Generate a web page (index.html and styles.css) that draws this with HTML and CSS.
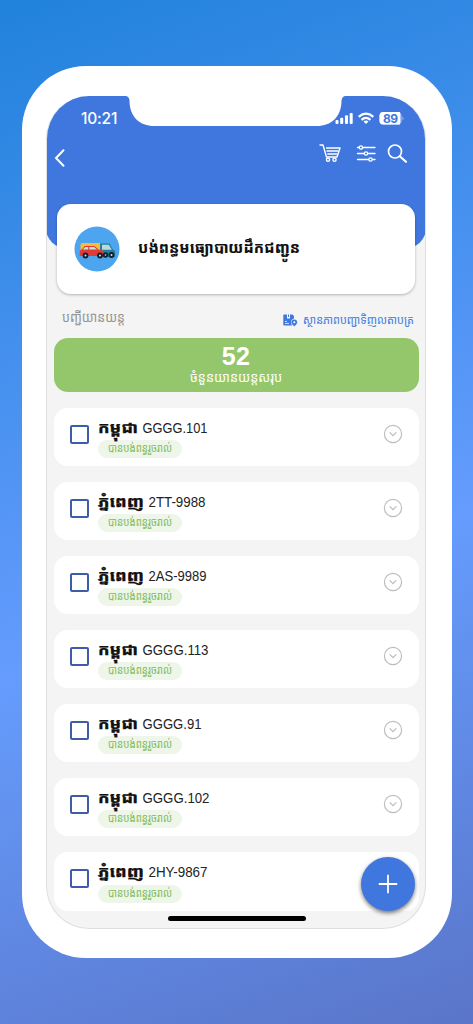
FILE: index.html
```
<!DOCTYPE html>
<html lang="km">
<head>
<meta charset="utf-8">
<title>Vehicles</title>
<link rel="stylesheet" href="styles.css">
</head>
<body>
<div class="phone">
<div class="screen">
  <svg class="notch" width="219" height="31" viewBox="0 0 219 31"><path d="M0 0Q3.200 .500 3.500 4.500C3.500 21 14 30 28 30H191C205 30 215.500 21 215.500 4.500Q216 .500 219 0Z" fill="#fff"/></svg>
  <header class="header">
    <div class="status">
      <span class="time">10:21</span>
      <svg class="status-icons" width="70" height="14" viewBox="0 0 70 14">
        <g fill="#fff"><rect x="0.500" y="9" width="3" height="4" rx="1"/><rect x="5.200" y="6.800" width="3" height="6.200" rx="1"/><rect x="10" y="4.300" width="3" height="8.700" rx="1"/><rect x="14.700" y="2" width="3" height="11" rx="1"/></g>
        <g fill="none" stroke="#fff" stroke-width="2.200"><path d="M23.700 5.800Q31 -.500 38.300 5.800"/><path d="M26.500 8.800Q31 5 35.500 8.800"/></g><path d="M28.500 10.400Q31 8.800 33.500 10.400L31 13Z" fill="#fff"/>
        <rect x="44.500" y="1" width="22" height="12.500" rx="3.800" fill="#b1c7f2"/><path d="M48.300 1H65v12.500H48.300a3.800 3.800 0 0 1-3.800-3.800V4.800A3.800 3.800 0 0 1 48.300 1Z" fill="#fff"/><path d="M67.500 5.500q2 1.700 0 4Z" fill="#b1c7f2"/>
        <text x="48" y="11.500" class="battery-text" textLength="15">89</text>
      </svg>
    </div>
    <div class="toolbar">
      <svg width="12" height="18" viewBox="0 0 12 18"><path d="M9.500 1.300L2 9l7.500 7.700" fill="none" stroke="#fff" stroke-width="2" stroke-linecap="round"/></svg>
      <svg class="actions" width="90" height="22" viewBox="0 0 90 22" fill="none" stroke="#fff" stroke-linecap="round" stroke-linejoin="round">
        <g stroke-width="1.400"><path d="M1 3H4L7.500 15H18L21 6H7.500M8 9H18.500M8.800 12H17.500"/><circle cx="9" cy="17.700" r="1.600"/><circle cx="15.500" cy="17.700" r="1.600"/></g>
        <g stroke-width="1.300"><path d="M38.500 5.500H40M43.800 5.500H56M38.500 11.500H45M49 11.500H56M38.500 17.500H49.500M53.500 17.500H56"/><circle cx="41.900" cy="5.500" r="1.700"/><circle cx="47" cy="11.500" r="1.700"/><circle cx="51.500" cy="17.500" r="1.700"/></g>
        <circle cx="76" cy="9.500" r="6.500" stroke-width="1.700"/><path d="M81 14.500L87 19.800" stroke-width="2.200"/>
      </svg>
    </div>
  </header>
  <section class="hero">
    <svg width="46" height="46" viewBox="0 0 46 46">
      <circle cx="23" cy="23" r="22.500" fill="#4ca5ee"/>
      <path d="M6.500 27V19q0-2 2-2H26V30H6.500Z" fill="#f7bd35"/>
      <path d="M26 30V17.500h9.500l3.500 6 2.200 1.500V31H26Z" fill="#237f9f"/><path d="M28 18.700h6.800l3 5H28Z" fill="#b7dbdc"/>
      <path d="M5.500 29.500l.5-5 2.800-2L10.500 20H20.500l4 3.500 5 1.300.8 5.200H7Z" fill="#df3c39"/><path d="M8.800 23.500l2.400-2.500H14.200v2.500ZM15.400 21h4.600l3 2.500h-7.600Z" fill="#c8e1df"/>
      <g fill="#171f2b"><circle cx="11.500" cy="29.500" r="2.900"/><circle cx="26" cy="29.500" r="2.900"/><circle cx="31.500" cy="29" r="2.700"/><circle cx="37.500" cy="29" r="2.900"/></g><g fill="#d6dfdf"><circle cx="11.500" cy="29.500" r="1"/><circle cx="26" cy="29.500" r="1"/><circle cx="31.500" cy="29" r=".8"/><circle cx="37.500" cy="29" r="1"/></g>
    </svg>
    <svg class="hero-title" width="164" height="32"><text x="0" y="20" textLength="162" lengthAdjust="spacingAndGlyphs">បង់ពន្ធមធ្យោបាយដឹកជញ្ជូន</text></svg>
  </section>
  <div class="section-head">
    <svg class="list-title" width="66" height="28"><text x="0" y="17" textLength="63" lengthAdjust="spacingAndGlyphs">បញ្ជីយានយន្ត</text></svg>
    <div class="order-link">
      <svg width="15" height="13" viewBox="0 0 15 13"><path d="M1 .5H4V4.500H7V.5H9.500L11 2V4.500Q7.500 5.500 8 9L9 11.500H1Q.3 11.500.3 10.700V1.300Q.3.500 1 .500Z" fill="#4178de"/><path d="M5 .5H6V3H5Z" fill="#4178de"/><path d="M2 7.500H4M2 9.500H6" stroke="#f4f4f4" stroke-width=".8"/><path d="M11.300 5.500A2.900 2.900 0 0 1 14.200 8.400Q14.200 10 11.300 12.500Q8.400 10 8.400 8.400A2.900 2.900 0 0 1 11.300 5.500Z" fill="#4178de"/><circle cx="11.300" cy="8.300" r="1" fill="#fff"/></svg>
      <svg width="112" height="26"><text x="0" y="16" textLength="111" lengthAdjust="spacingAndGlyphs">ស្ថានភាពបញ្ជាទិញលតាបត្រ</text></svg>
    </div>
  </div>
  <section class="summary">
    <strong>52</strong>
    <svg width="94" height="24"><text x="1" y="13" textLength="92" lengthAdjust="spacingAndGlyphs">ចំនួនយានយន្តសរុប</text></svg>
  </section>
  <main class="list" id="list"></main>
  <button class="fab" aria-label="+"><svg width="20" height="20" viewBox="0 0 20 20"><path d="M10 1.500V18.500M1.500 10H18.500" stroke="#fff" stroke-width="1.800" stroke-linecap="round"/></svg></button>
  <div class="home-bar"></div>
</div>
</div>
<script src="app.js"></script>
</body>
</html>
```
FILE: app.js
```
const vehicles = [
  ["កម្ពុជា", 40, "GGGG.101", 65],
  ["ភ្នំពេញ", 46, "2TT-9988", 57],
  ["ភ្នំពេញ", 46, "2AS-9989", 58],
  ["កម្ពុជា", 40, "GGGG.113", 66],
  ["កម្ពុជា", 40, "GGGG.91", 59],
  ["កម្ពុជា", 40, "GGGG.102", 67],
  ["ភ្នំពេញ", 46, "2HY-9867", 59]
];
document.getElementById("list").innerHTML = vehicles.map(([place, placeWidth, plate, plateWidth]) => `
  <article class="vehicle">
    <span class="checkbox"></span>
    <div class="details">
      <svg class="name" width="130" height="30"><text class="place" x="0" y="18" textLength="${placeWidth}" lengthAdjust="spacingAndGlyphs">${place}</text><text class="plate" x="${placeWidth + 4.5}" y="17.800" textLength="${plateWidth}" lengthAdjust="spacingAndGlyphs">${plate}</text></svg>
      <div class="badge"><svg width="66" height="18"><text x="0" y="12" textLength="64" lengthAdjust="spacingAndGlyphs">បានបង់ពន្ធរួចរាល់</text></svg></div>
    </div>
    <svg class="chevron" width="20" height="20" viewBox="0 0 20 20" fill="none" stroke="#bdbdbd"><circle cx="10" cy="10" r="8.600" stroke-width="1.200"/><path d="M7 8.700L10 11.700L13 8.700" stroke-width="1.200" stroke-linecap="round"/></svg>
  </article>`).join("");
```
FILE: styles.css
```
* { box-sizing: border-box; }
body {
  margin: 0;
  height: 1024px;
  padding: 66px 21px 0 21.500px;
  overflow: hidden;
  background: linear-gradient(160deg, #2082dc 0%, #659cfd 57%, #5a75c9 100%);
  font-family: "Noto Sans Khmer", "Khmer OS", "Noto Sans", "DejaVu Sans", sans-serif;
}
svg { display: block; flex: none; overflow: visible; }
.phone { width: 430.500px; height: 892px; padding: 29.5px 26px 30px 24.5px; border-radius: 64px; background: #fff; }
.screen { position: relative; display: flex; flex-direction: column; height: 833px; border: 1px solid #dedfe1; border-top: 0; border-radius: 43px; background: #f4f4f4; overflow: hidden; }
.notch { position: absolute; left: 79px; top: 0; }
.header { flex: none; height: 152px; margin: 0 -1px; background: #4077de; border-radius: 0 0 20px 20px; }
.status { display: flex; justify-content: space-between; padding: 15px 21px 0 35px; height: 45px; }
.status-icons { position: relative; }
.time { color: #fff; font: 500 15.500px/15px Inter, sans-serif; letter-spacing: -.2px; }
.battery-text { fill: #4077de; font: 700 12px Inter, sans-serif; }
.toolbar { display: flex; justify-content: space-between; padding: 8px 17px 0 8px; align-items: flex-start; }
.toolbar .actions { margin-top: -7px; }
.hero { position: relative; flex: none; display: flex; align-items: center; gap: 18px; width: 358px; height: 90px; margin: -43.500px 0 0 10px; padding-left: 17px; border-radius: 14px; background: #fff; box-shadow: 0 1px 3px #0004; }
.hero-title { font-size: 15.500px; font-weight: 800; fill: #111; }
.section-head { flex: none; display: flex; justify-content: space-between; height: 44px; padding: 11px 10px 0 14.500px; }
.list-title { font-size: 14px; fill: #929292; }
.order-link { display: flex; gap: 5px; padding-top: 9px; font-size: 12px; fill: #4178de; }
.order-link svg + svg { margin-top: -6px; }
.summary { flex: none; display: flex; flex-direction: column; align-items: center; width: 365px; height: 54px; margin-left: 6.500px; padding-top: 5px; border-radius: 14px; background: #94c76b; color: #fff; font-size: 13.500px; fill: #fff; }
.summary strong { font: 700 25px/26px "Liberation Sans", Arial, sans-serif; letter-spacing: .3px; }
.list { display: flex; flex-direction: column; gap: 15.600px; padding: 15.500px 0 0 6.500px; }
.vehicle { flex: none; display: flex; width: 365px; height: 58.500px; padding: 0 16px 0 16.500px; border-radius: 14px; background: #fff; }
.checkbox { flex: none; width: 19px; height: 19px; margin-top: 17px; border: 2px solid #3e5da8; border-radius: 2px; }
.details { flex: 1; padding: 7px 0 0 9px; }
.name { font-size: 15px; margin-bottom: -4.500px; }
.place { font-weight: 800; fill: #111; stroke: #111; stroke-width: .25px; }
.plate { font-family: "Liberation Sans", Arial, sans-serif; font-size: 15px; fill: #222; }
.badge { display: flex; width: 84px; height: 18px; padding-left: 9.500px; border-radius: 9px; background: #edf6e8; font-size: 12px; fill: #7dba5c; }
.chevron { margin-top: 16px; }
.fab { position: absolute; right: 10px; bottom: 16.500px; display: grid; place-items: center; width: 54px; height: 54px; padding: 0; border: 0; border-radius: 50%; background: #4077de; box-shadow: 0 2px 4px #0008; }
.home-bar { position: absolute; left: 120.500px; bottom: 7px; width: 138px; height: 5px; border-radius: 3px; background: #000; }
```
